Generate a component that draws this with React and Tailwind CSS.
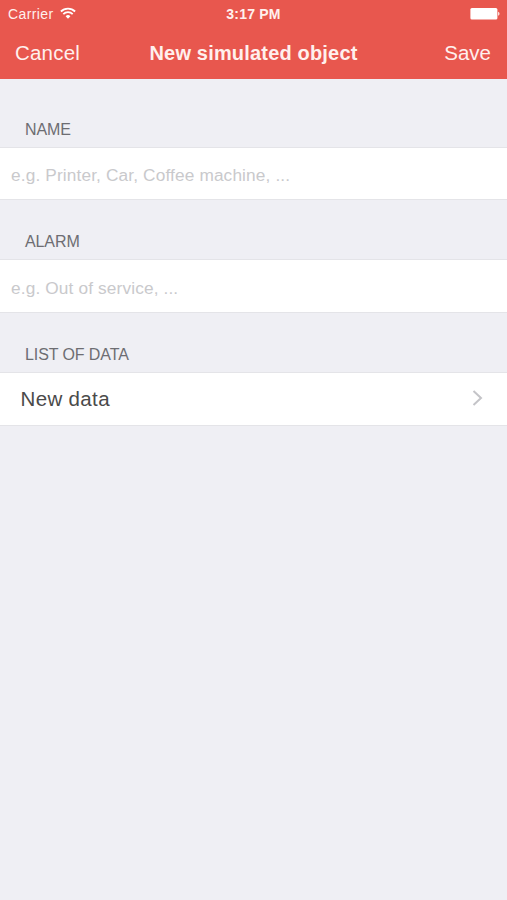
import { useState } from "react";

function StatusBar() {
  return (
    <div className="relative flex h-[26px] items-center justify-between pl-2 pr-[7px] pt-[2px] text-[14px] text-white">
      <div className="flex items-center gap-[6px]">
        <span className="tracking-[0.4px] text-[#fff0ed]">Carrier</span>
        <svg className="-mt-[2px]" width="16" height="12" viewBox="0 0 16 12" fill="none" stroke="currentColor" strokeWidth="1.8">
          <path d="M0.9 4.5a10 10 0 0 1 14.2 0" />
          <path d="M3.3 7.1a6.6 6.6 0 0 1 9.4 0" />
          <path d="M8 11.7 5.6 9.3a3.4 3.4 0 0 1 4.8 0z" fill="currentColor" stroke="none" />
        </svg>
      </div>
      <span className="absolute left-1/2 -translate-x-1/2 whitespace-nowrap text-[14px] font-bold tracking-[0.2px] text-[#fff0ed]">
        3:17 PM
      </span>
      <svg width="30" height="12" viewBox="0 0 30 12" fill="currentColor">
        <rect x="0.4" y="0" width="27" height="11.4" rx="1.5" />
        <path d="M28.2 3.8v4a2.2 2.2 0 0 0 0-4z" />
      </svg>
    </div>
  );
}

function NavBar() {
  return (
    <div className="relative flex h-[53px] items-center justify-between pl-[15px] pr-4 text-[20.5px] text-[#fff0ed]">
      <button className="pt-[2px] tracking-[0.2px]">Cancel</button>
      <h1 className="absolute left-1/2 -translate-x-1/2 whitespace-nowrap text-[20px] font-bold tracking-[0.18px]">
        New simulated object
      </h1>
      <button className="pt-[2px]">Save</button>
    </div>
  );
}

function SectionTitle({ children }) {
  return (
    <h2 className="flex h-[59px] items-end px-[25px] pb-[5px] text-[16px] tracking-[-0.1px] text-[#6d6d72]">
      {children}
    </h2>
  );
}

function Field({ placeholder, className }) {
  const [value, setValue] = useState("");

  return (
    <input
      className={`block w-full border-y border-[#e4e4e8] bg-white px-[11px] pt-1 text-[17.25px] tracking-[0.14px] outline-none placeholder:text-[#c9c9cc] ${className}`}
      placeholder={placeholder}
      value={value}
      onChange={(event) => setValue(event.target.value)}
    />
  );
}

function App() {
  return (
    <div className="min-h-screen bg-[#efeff4] font-['Liberation_Sans',sans-serif]">
      <header className="h-[79px] bg-[#e8574e]">
        <StatusBar />
        <NavBar />
      </header>
      <main className="pt-[9px]">
        <SectionTitle>NAME</SectionTitle>
        <Field className="h-[53px]" placeholder="e.g. Printer, Car, Coffee machine, ..." />
        <SectionTitle>ALARM</SectionTitle>
        <Field className="h-[54px]" placeholder="e.g. Out of service, ..." />
        <SectionTitle>LIST OF DATA</SectionTitle>
        <button className="flex h-[54px] w-full items-center justify-between border-y border-[#e4e4e8] bg-white pb-[2px] pl-[20.5px] pr-[24px] text-[20.5px] text-[#4a4a4a]">
          <span className="pt-[3px] tracking-[0.35px]">New data</span>
          <svg width="11" height="16" viewBox="0 0 11 16" fill="none" stroke="#c4c4c8" strokeWidth="2">
            <path d="M1.5 1 9 8l-7.5 7" />
          </svg>
        </button>
      </main>
    </div>
  );
}

export default App;
